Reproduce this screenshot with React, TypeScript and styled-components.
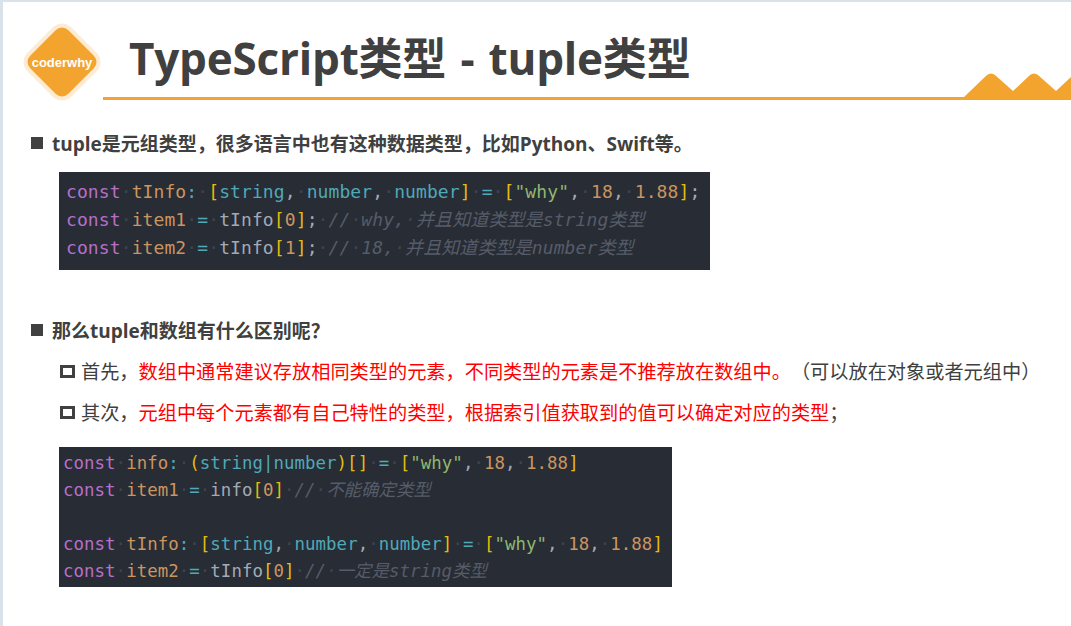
import React from 'react';
import styled, {createGlobalStyle} from 'styled-components';

const GlobalStyle = createGlobalStyle`
   html, body {
      margin: 0;
      padding: 0;
      background: #fff;
   }
`;

const Slide = styled.div`
   width: 1071px;
   height: 626px;
   box-sizing: border-box;
   overflow: hidden;
   background: #fff;
   border-left: 3px solid #d9e2ea;
   border-top: 2px solid #d9e2ea;
   font-family: 'Open Sans', 'Noto Sans CJK SC', sans-serif;
   color: #404040;
`;

const Header = styled.header`
   display: flex;
   align-items: flex-start;
   padding: 22px 0 0 20px;
   height: 99px;
   box-sizing: border-box;
`;

const Logo = styled.div`
   position: relative;
   flex: none;
   width: 78px;
   height: 76px;
   margin-right: 2px;
   display: flex;
   align-items: center;
   justify-content: center;
   color: #fff;
   font: bold 13px 'Liberation Sans', sans-serif;

   &::before {
      content: '';
      position: absolute;
      left: 12px;
      top: 11px;
      width: 54px;
      height: 54px;
      box-sizing: border-box;
      background: #f2a42f;
      border-radius: 9px;
      box-shadow: 0 0 0 4px #fdebd3;
      transform: rotate(45deg);
   }

   span {
      position: relative;
   }
`;

const TitleColumn = styled.div`
   flex: 1;
   height: 76px;
   display: flex;
   flex-direction: column;
   justify-content: space-between;
`;

const Title = styled.h1`
   margin: 0;
   padding: 4px 0 0 26px;
   font-family: 'Open Sans', 'Noto Sans CJK SC', sans-serif;
   font-size: 44px;
   line-height: 60px;
   font-weight: 700;
   letter-spacing: -0.2px;
   word-spacing: 3px;
   white-space: nowrap;
`;

const RuleRow = styled.div`
   display: flex;
   align-items: flex-end;
   height: 27px;
   margin-top: -27px;
`;

const Rule = styled.div`
   flex: 1;
   height: 3px;
   background: #f2a42f;
`;

const Content = styled.main`
   display: flex;
   flex-direction: column;
   padding-left: 28px;
`;

const Point = styled.div`
   display: flex;
   align-items: center;
   height: 28px;
   margin-top: ${(p) => p.$top}px;
   font-size: 19px;
   font-weight: 700;
   white-space: nowrap;
`;

const SolidBullet = styled.i`
   flex: none;
   width: 12px;
   height: 12px;
   margin-right: 9px;
   background: #404040;
`;

const SubPoint = styled.div`
   display: flex;
   align-items: center;
   height: 28px;
   margin: ${(p) => p.$top}px 0 0 29px;
   font-size: 19.2px;
   white-space: nowrap;
`;

const HollowBullet = styled.i`
   flex: none;
   width: 15px;
   height: 13px;
   box-sizing: border-box;
   margin-right: 6px;
   border: 3px solid #404040;
`;

const Red = styled.span`
   color: #ff0000;
`;

const CodeBlock = styled.pre`
   margin: ${(p) => p.$top}px 0 0 28px;
   width: ${(p) => p.$width}px;
   height: ${(p) => p.$height}px;
   box-sizing: border-box;
   padding: ${(p) => p.$padTop}px 0 0 ${(p) => p.$padLeft}px;
   background: #282c34;
   font-family: 'DejaVu Sans Mono', 'Noto Sans CJK SC', monospace;
   font-size: ${(p) => p.$size}px;
   line-height: ${(p) => p.$line}px;
   letter-spacing: ${(p) => p.$spacing}px;
   color: #abb2bf;
`;

const CodeLine = styled.div`
   height: ${(p) => p.$line}px;
   white-space: pre;
`;

const Keyword = styled.span`color: #b76fc9;`;
const Variable = styled.span`color: #cb9560;`;
const Type = styled.span`color: #4fa9b8;`;
const Bracket = styled.span`color: #e2bd0b;`;
const Str = styled.span`color: #8fb86f;`;
const Num = styled.span`color: #cb9560;`;
const Plain = styled.span`color: #a3aab6;`;
const Dot = styled.span`color: #3e4450;`;
const Comment = styled.span`
   color: #565c69;
   font-style: italic;
`;

const S = () => <Dot>·</Dot>;

const Mountains = () => (
   <svg width='107' height='27' viewBox='0 0 107 27' style={{display: 'block', flex: 'none'}}>
      <path
         d='M0 27 L0 24 L23 2 Q27 -1 31 2 L49 18 L66 2 Q70 -1 74 2 L92 18 L107 4 L107 27 Z'
         fill='#f2a42f'
      />
   </svg>
);

export default function App() {
   return (
      <Slide>
         <GlobalStyle />
         <Header>
            <Logo>
               <span>coderwhy</span>
            </Logo>
            <TitleColumn>
               <Title>TypeScript类型 - tuple类型</Title>
               <RuleRow>
                  <Rule />
                  <Mountains />
               </RuleRow>
            </TitleColumn>
         </Header>
         <Content>
            <Point $top={28}>
               <SolidBullet />
               tuple是元组类型，很多语言中也有这种数据类型，比如Python、Swift等。
            </Point>
            <CodeBlock $top={15} $width={651} $height={98} $padTop={6} $padLeft={7} $size={18} $line={28} $spacing={0.1}>
               <CodeLine $line={28}>
                  <Keyword>const</Keyword><S /><Variable>tInfo</Variable><Type>:</Type><S /><Bracket>[</Bracket><Type>string</Type><Plain>,</Plain><S /><Type>number</Type><Plain>,</Plain><S /><Type>number</Type><Bracket>]</Bracket><S /><Type>=</Type><S /><Bracket>[</Bracket><Str>"why"</Str><Plain>,</Plain><S /><Num>18</Num><Plain>,</Plain><S /><Num>1.88</Num><Bracket>]</Bracket><Plain>;</Plain>
               </CodeLine>
               <CodeLine $line={28}>
                  <Keyword>const</Keyword><S /><Variable>item1</Variable><S /><Type>=</Type><S /><Plain>tInfo</Plain><Bracket>[</Bracket><Num>0</Num><Bracket>]</Bracket><Plain>;</Plain><S /><Comment>//<S />why,<S />并且知道类型是string类型</Comment>
               </CodeLine>
               <CodeLine $line={28}>
                  <Keyword>const</Keyword><S /><Variable>item2</Variable><S /><Type>=</Type><S /><Plain>tInfo</Plain><Bracket>[</Bracket><Num>1</Num><Bracket>]</Bracket><Plain>;</Plain><S /><Comment>//<S />18,<S />并且知道类型是number类型</Comment>
               </CodeLine>
            </CodeBlock>
            <Point $top={46}>
               <SolidBullet />
               那么tuple和数组有什么区别呢？
            </Point>
            <SubPoint $top={13}>
               <HollowBullet />
               首先，<Red>数组中通常建议存放相同类型的元素，不同类型的元素是不推荐放在数组中。</Red>（可以放在对象或者元组中）
            </SubPoint>
            <SubPoint $top={13}>
               <HollowBullet />
               其次，<Red>元组中每个元素都有自己特性的类型，根据索引值获取到的值可以确定对应的类型</Red>；
            </SubPoint>
            <CodeBlock $top={21} $width={613} $height={140} $padTop={3} $padLeft={4} $size={17.4} $line={27} $spacing={0.05}>
               <CodeLine $line={27}>
                  <Keyword>const</Keyword><S /><Variable>info</Variable><Type>:</Type><S /><Bracket>(</Bracket><Type>string|number</Type><Bracket>)[]</Bracket><S /><Type>=</Type><S /><Bracket>[</Bracket><Str>"why"</Str><Plain>,</Plain><S /><Num>18</Num><Plain>,</Plain><S /><Num>1.88</Num><Bracket>]</Bracket>
               </CodeLine>
               <CodeLine $line={27}>
                  <Keyword>const</Keyword><S /><Variable>item1</Variable><S /><Type>=</Type><S /><Plain>info</Plain><Bracket>[</Bracket><Num>0</Num><Bracket>]</Bracket><S /><Comment>//<S />不能确定类型</Comment>
               </CodeLine>
               <CodeLine $line={27} />
               <CodeLine $line={27}>
                  <Keyword>const</Keyword><S /><Variable>tInfo</Variable><Type>:</Type><S /><Bracket>[</Bracket><Type>string</Type><Plain>,</Plain><S /><Type>number</Type><Plain>,</Plain><S /><Type>number</Type><Bracket>]</Bracket><S /><Type>=</Type><S /><Bracket>[</Bracket><Str>"why"</Str><Plain>,</Plain><S /><Num>18</Num><Plain>,</Plain><S /><Num>1.88</Num><Bracket>]</Bracket>
               </CodeLine>
               <CodeLine $line={27}>
                  <Keyword>const</Keyword><S /><Variable>item2</Variable><S /><Type>=</Type><S /><Plain>tInfo</Plain><Bracket>[</Bracket><Num>0</Num><Bracket>]</Bracket><S /><Comment>//<S />一定是string类型</Comment>
               </CodeLine>
            </CodeBlock>
         </Content>
      </Slide>
   );
}
